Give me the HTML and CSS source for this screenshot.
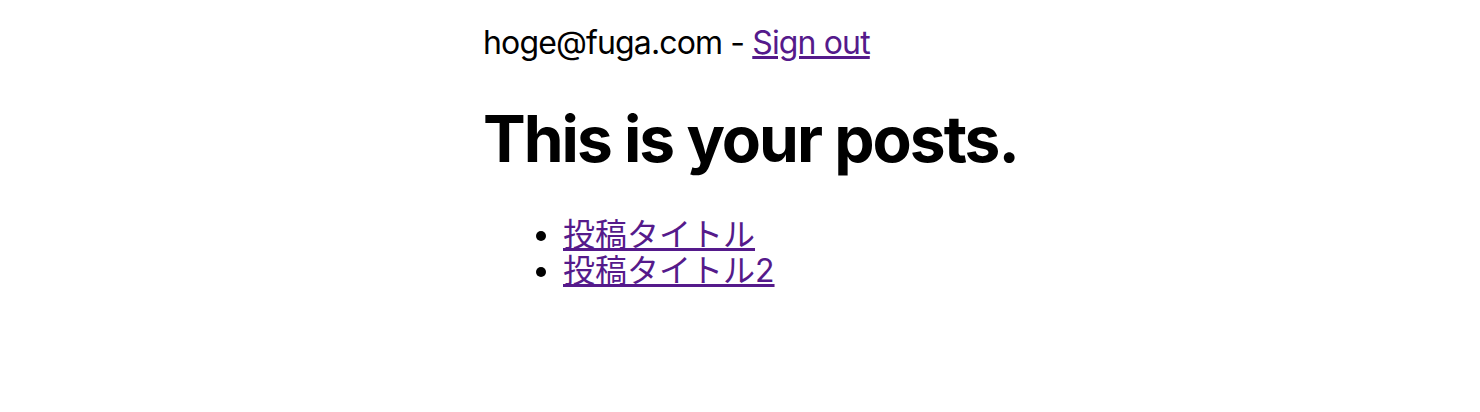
FILE: index.html
```html
<!DOCTYPE html>
<html lang="ja">
<head>
    <meta charset="UTF-8">
    <meta name="viewport" content="width=device-width, initial-scale=1.0">
    <title>Posts</title>
    <link rel="stylesheet" href="styles.css">
</head>
<body>
    <div class="container">
        <div class="account">
            hoge@fuga.com - <a href="#">Sign out</a>
        </div>
        <h1>This is your posts.</h1>
        <ul class="posts">
            <li><a href="#">投稿タイトル</a></li>
            <li><a href="#">投稿タイトル2</a></li>
        </ul>
    </div>
</body>
</html>
```

FILE: styles.css
```css
body {
    margin: 0;
    font-family: Inter, "Noto Sans CJK JP", sans-serif;
    font-size: 32px;
    color: #000;
}
.container {
    width: 514px;
    margin: 0 auto;
}
.account {
    padding-top: 23px;
    line-height: 39px;
    letter-spacing: -0.027em;
}
a {
    color: #551a8b;
}
h1 {
    font-size: 64px;
    font-weight: bold;
    margin: 38px 0 40px;
    line-height: 77px;
    letter-spacing: -0.031em;
    white-space: nowrap;
}
.posts {
    margin: 0;
    padding-left: 80px;
    line-height: 36px;
}
```
